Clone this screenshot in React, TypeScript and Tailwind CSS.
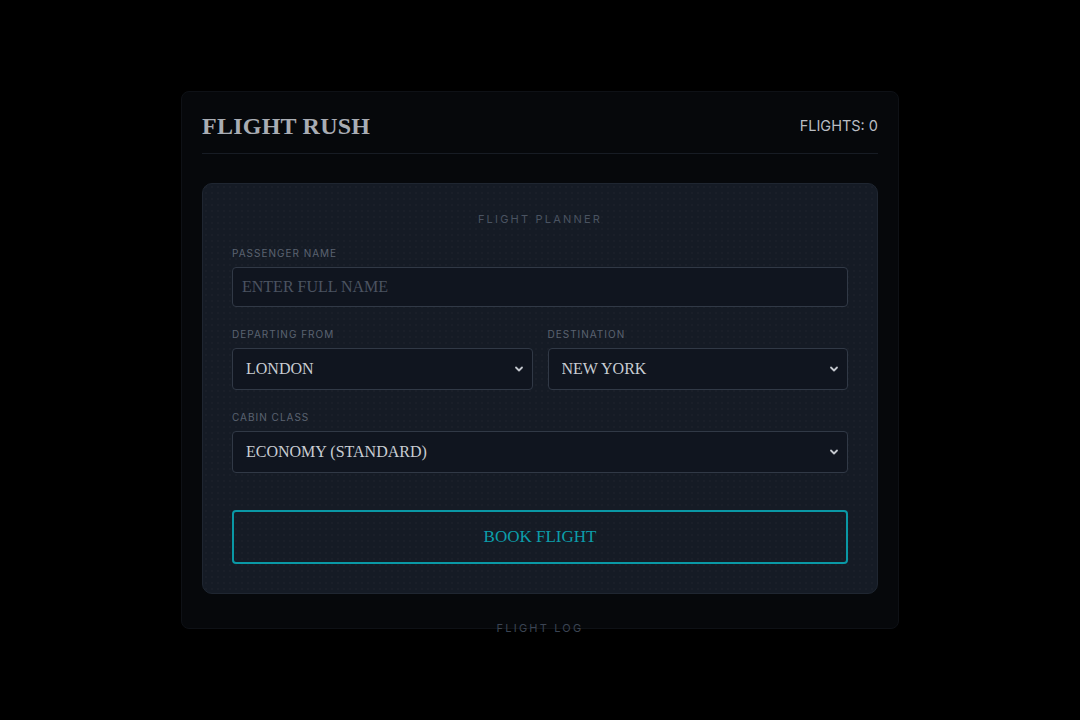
import { useState } from "react";

const serif = "font-['Liberation_Serif','DejaVu_Serif',serif]";
const sans = "font-['Inter','Noto_Sans',sans-serif]";

function Chevron() {
  return (
    <svg
      width="10"
      height="10"
      viewBox="0 0 10 10"
      className="pointer-events-none absolute right-[9px] top-1/2 -translate-y-1/2 text-[#c3c7cd]"
      aria-hidden
    >
      <path d="M2 3.5 L5 6.5 L8 3.5" fill="none" stroke="currentColor" strokeWidth="1.8" strokeLinecap="round" strokeLinejoin="round" />
    </svg>
  );
}

function Field({ label, children }: { label: string; children: React.ReactNode }) {
  return (
    <div className="flex flex-col min-w-0">
      <label className={`${sans} text-[10px] leading-[12px] tracking-[0.1em] text-[#5b6371] uppercase mb-2`}>
        {label}
      </label>
      {children}
    </div>
  );
}

function Select({ value, options, onChange }: { value: string; options: string[]; onChange: (v: string) => void }) {
  return (
    <div className="relative">
      <select
        value={value}
        onChange={(e) => onChange(e.target.value)}
        className={`${serif} appearance-none w-full h-[42px] rounded-[4px] border border-[#313946] bg-[#10151f] pl-[13px] pr-8 text-[16px] text-[#c9cdd3] uppercase outline-none`}
      >
        {options.map((o) => (
          <option key={o}>{o}</option>
        ))}
      </select>
      <Chevron />
    </div>
  );
}

export default function App() {
  const [name, setName] = useState("");
  const [from, setFrom] = useState("LONDON");
  const [to, setTo] = useState("NEW YORK");
  const [cabin, setCabin] = useState("ECONOMY (STANDARD)");

  return (
    <main className="min-h-screen w-full bg-black flex items-center justify-center">
      <div className="w-[718px] h-[538px] rounded-[8px] border border-[#0e1116] bg-[#06080b] p-5 flex flex-col">
        <div className="flex items-center justify-between pb-[13px] border-b border-[#171c24]">
          <h1 className={`${serif} text-[24px] leading-[28px] font-bold tracking-[0.01em] text-[#a9adb4]`}>
            FLIGHT RUSH
          </h1>
          <span className={`${sans} text-[14.5px] text-[#b9bdc3]`}>FLIGHTS: 0</span>
        </div>

        {/* planner card */}
        <section className="mt-[29px] rounded-[10px] border border-[#1f2631] bg-[#151b25] bg-[radial-gradient(rgba(255,255,255,0.02)_1px,transparent_1px)] bg-[size:6px_6px] p-[29px]">
          <h2 className={`${sans} text-center text-[11px] leading-[13px] tracking-[0.2em] text-[#4a5361] uppercase`}>
            Flight Planner
          </h2>

          <div className="mt-[21px] flex flex-col gap-[21px]">
            <Field label="Passenger Name">
              <input
                value={name}
                onChange={(e) => setName(e.target.value)}
                placeholder="ENTER FULL NAME"
                className={`${serif} w-full h-[40px] rounded-[4px] border border-[#313946] bg-[#10151f] px-[9px] text-[16px] text-[#c9cdd3] placeholder:text-[#4b5361] outline-none`}
              />
            </Field>

            <div className="grid grid-cols-2 gap-[15px]">
              <Field label="Departing From">
                <Select value={from} onChange={setFrom} options={["LONDON", "PARIS", "TOKYO", "NEW YORK"]} />
              </Field>
              <Field label="Destination">
                <Select value={to} onChange={setTo} options={["NEW YORK", "LONDON", "PARIS", "TOKYO"]} />
              </Field>
            </div>

            <Field label="Cabin Class">
              <Select
                value={cabin}
                onChange={setCabin}
                options={["ECONOMY (STANDARD)", "BUSINESS", "FIRST CLASS"]}
              />
            </Field>
          </div>

          <button
            type="button"
            className={`${serif} mt-[37px] w-full h-[54px] rounded-[4px] border-2 border-[#0a98a5] bg-transparent text-[17px] text-[#0c9eab] uppercase`}
          >
            Book Flight
          </button>
        </section>

        <h3 className={`${sans} mt-[28px] text-center text-[11px] leading-[13px] tracking-[0.2em] text-[#3b4453] uppercase`}>
          Flight Log
        </h3>
      </div>
    </main>
  );
}
